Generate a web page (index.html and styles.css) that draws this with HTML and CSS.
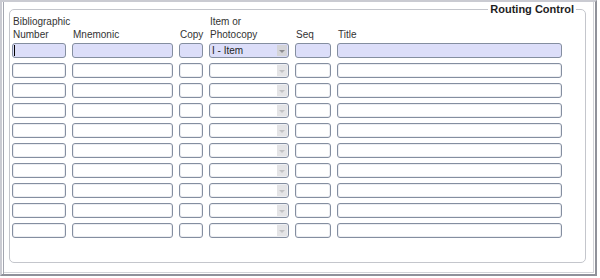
FILE: index.html
```html
<!DOCTYPE html>
<html lang="en">
<head>
    <meta charset="UTF-8">
    <title>Routing Control</title>
    <link rel="stylesheet" href="styles.css">
</head>
<body>
    <div class="frame">
        <fieldset class="group">
            <legend>Routing Control</legend>

            <div class="grid head">
                <div>Bibliographic<br>Number</div>
                <div>Mnemonic</div>
                <div>Copy</div>
                <div>Item or<br>Photocopy</div>
                <div>Seq</div>
                <div>Title</div>
            </div>

            <div class="grid rows">
                <div class="field active"><span class="caret"></span></div>
                <div class="field active"></div>
                <div class="field active"></div>
                <div class="field select active"><span class="value">I - Item</span><span class="arrow"></span></div>
                <div class="field active"></div>
                <div class="field active"></div>

                <div class="field"></div><div class="field"></div><div class="field"></div>
                <div class="field select"><span class="arrow"></span></div><div class="field"></div><div class="field"></div>

                <div class="field"></div><div class="field"></div><div class="field"></div>
                <div class="field select"><span class="arrow"></span></div><div class="field"></div><div class="field"></div>

                <div class="field"></div><div class="field"></div><div class="field"></div>
                <div class="field select"><span class="arrow"></span></div><div class="field"></div><div class="field"></div>

                <div class="field"></div><div class="field"></div><div class="field"></div>
                <div class="field select"><span class="arrow"></span></div><div class="field"></div><div class="field"></div>

                <div class="field"></div><div class="field"></div><div class="field"></div>
                <div class="field select"><span class="arrow"></span></div><div class="field"></div><div class="field"></div>

                <div class="field"></div><div class="field"></div><div class="field"></div>
                <div class="field select"><span class="arrow"></span></div><div class="field"></div><div class="field"></div>

                <div class="field"></div><div class="field"></div><div class="field"></div>
                <div class="field select"><span class="arrow"></span></div><div class="field"></div><div class="field"></div>

                <div class="field"></div><div class="field"></div><div class="field"></div>
                <div class="field select"><span class="arrow"></span></div><div class="field"></div><div class="field"></div>

                <div class="field"></div><div class="field"></div><div class="field"></div>
                <div class="field select"><span class="arrow"></span></div><div class="field"></div><div class="field"></div>
            </div>
        </fieldset>
    </div>
</body>
</html>
```

FILE: styles.css
```css
body {
    margin: 0;
    background: #fff;
    font-family: "Liberation Sans", Arial, sans-serif;
    color: #333;
}
.frame {
    box-sizing: border-box;
    width: 597px;
    height: 276px;
    border-style: solid;
    border-width: 2px;
    border-color: #cacbd2 #8f919a #8f919a #cacbd2;
    box-shadow: inset 1px 0 0 #fff, inset 2px 0 0 #a3a6b0, inset -1px -1px 0 #fff, inset -2px -2px 0 #d2d3d8;
    padding: 1px 9px 0 7px;
}
.group {
    box-sizing: border-box;
    height: 260px;
    margin: 0;
    padding: 0 2px;
    min-width: 0;
    border: 1px solid #c4c6cc;
    border-radius: 5px;
}
.group legend {
    margin-left: auto;
    margin-right: 7px;
    padding: 0 2px;
    font-size: 11px;
    line-height: 12px;
    font-weight: bold;
    color: #1e1e1e;
}
.grid {
    display: grid;
    grid-template-columns: 54px 101px 24px 80px 36px 225px;
    column-gap: 6px;
}
.head {
    align-items: end;
    font-size: 10px;
    line-height: 13px;
    margin-bottom: 2px;
}
.head div { padding-left: 1px; }
.rows { row-gap: 5px; }
.field {
    position: relative;
    box-sizing: border-box;
    height: 15px;
    border: 1px solid #848ea0;
    border-radius: 3px;
    background: #fff;
    box-shadow: inset 0 0 0 1px #eceef2;
    font-size: 10px;
    line-height: 13px;
    color: #1e1e1e;
}
.field.active {
    background: #dcdef9;
    box-shadow: none;
}
.caret {
    position: absolute;
    left: 1px;
    top: 1px;
    width: 1px;
    height: 11px;
    background: #000;
}
.select .value { padding-left: 2px; }
.arrow {
    position: absolute;
    right: 1px;
    top: 1px;
    bottom: 1px;
    width: 10px;
    background: #e4e4e6;
}
.arrow::after {
    content: "";
    position: absolute;
    left: 2px;
    top: 5px;
    border-top: 3px solid #c2c2c4;
    border-left: 3px solid transparent;
    border-right: 3px solid transparent;
}
.active .arrow { background: #d4d4d8; }
.active .arrow::after { border-top-color: #8c8c90; }
```
